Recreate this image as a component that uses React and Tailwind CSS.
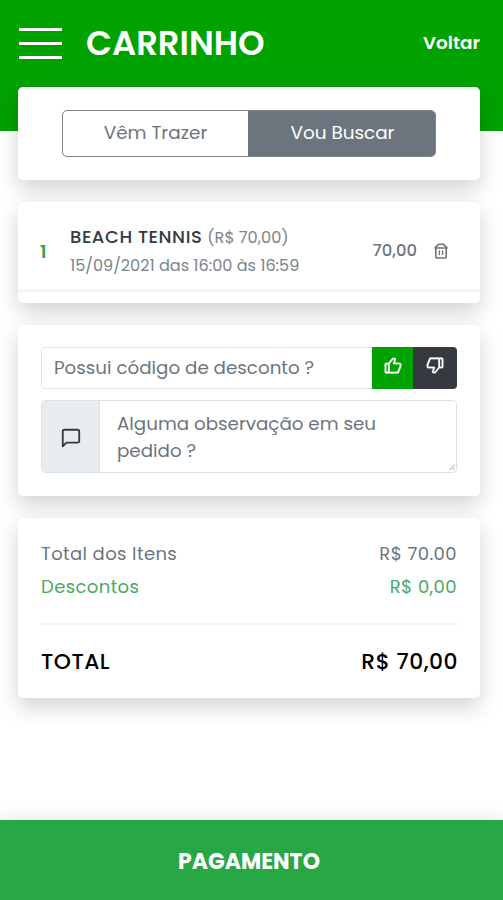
import React from 'react';
import { FiMessageSquare } from 'react-icons/fi';
import { BiLike, BiDislike } from 'react-icons/bi';

const TrashIcon = () => (
    <svg className="h-4 w-[14px]" viewBox="0 0 14 16" fill="none" stroke="#747474" strokeWidth="1.6" strokeLinejoin="round" strokeLinecap="round">
        <path d="M0.9 5h12.2M1.2 4.6L4.8 1.2h4.4l3.6 3.4M1.8 5v8.2q0 1.8 1.8 1.8h6.8q1.8 0 1.8-1.8V5" />
        <path d="M5.4 8v3.6M8.6 8v3.6" strokeWidth="1.4" />
    </svg>
);

const Card = ({ className, children }) => (
    <section className={`w-[462px] rounded-[5px] bg-white shadow-[0_9px_22px_rgba(0,0,0,0.18)] ${className}`}>
        {children}
    </section>
);

const App = () => {
    return (
        <div className="flex h-[900px] w-[503px] flex-col overflow-hidden bg-[linear-gradient(#00a200_131px,#ffffff_131px)] font-['Poppins','Inter',sans-serif] text-[#6c757d]">
            <header className="flex h-[87px] shrink-0 items-center pl-[19px] pr-[23px]">
                <button className="flex w-[43px] flex-col gap-[11px]" aria-label="Menu">
                    <span className="h-[3px] w-full bg-white" />
                    <span className="h-[3px] w-full bg-white" />
                    <span className="h-[3px] w-full bg-white" />
                </button>
                <h1 className="ml-6 w-[180px] whitespace-nowrap text-[33.8px] font-semibold leading-none text-white">CARRINHO</h1>
                <a className="mb-[2px] ml-auto text-[18.4px] font-semibold text-white">Voltar</a>
            </header>

            <main className="flex flex-1 flex-col pl-[18px]">
                <Card className="flex h-[93px] justify-center pt-[23px]">
                    <div className="flex h-[47px] w-[374px] overflow-hidden rounded-[5px] border border-[#7c8388] text-[18.4px]">
                        <button className="w-[185px] pb-[2px]">Vêm Trazer</button>
                        <button className="flex-1 bg-[#6c757d] pb-[2px] pl-[2px] text-white">Vou Buscar</button>
                    </div>
                </Card>

                <Card className="mt-[22px] h-[101px]">
                    <div className="flex h-[90px] items-center border-b-[3px] border-[#f5f5f5] pl-[22px] pr-8 pt-[11px]">
                        <span className="w-[30px] text-[18px] font-semibold text-[#28a745]">1</span>
                        <div className="flex-1 whitespace-nowrap">
                            <p className="text-[18px] leading-7 text-[#343a40]">
                                <span className="font-medium tracking-[0.55px]">BEACH TENNIS</span> <span className="text-[16.2px] text-[#7c848b]">(R$ 70,00)</span>
                            </p>
                            <p className="text-[16.1px] leading-7 text-[#7c848b]">15/09/2021 das 16:00 às 16:59</p>
                        </div>
                        <span className="mr-[17px] pt-px text-[16.4px] font-medium">70,00</span>
                        <TrashIcon />
                    </div>
                </Card>

                <Card className="mt-[22px] flex h-[171px] flex-col gap-[11px] px-[23px] pt-[22px]">
                    <div className="flex h-[42px] overflow-hidden rounded-[4px]">
                        <div className="flex flex-1 items-center rounded-l-[4px] border border-r-0 border-[#dfe3e7] pl-3 text-[18.3px]">Possui código de desconto ?</div>
                        <button className="flex w-[41px] justify-center bg-[#00a200] pt-[9px] text-white"><BiLike size={20} stroke="currentColor" strokeWidth={0.3} /></button>
                        <button className="flex w-[44px] justify-center bg-[#343a40] pt-[8px] text-white"><BiDislike size={20} stroke="currentColor" strokeWidth={0.3} /></button>
                    </div>
                    <div className="flex h-[73px] overflow-hidden rounded-[4px] border border-[#dde1e5]">
                        <div className="flex w-[58px] items-center justify-center border-r border-[#dde1e5] bg-[#e9ecef] pt-[2px] text-[#343a40]">
                            <FiMessageSquare size={22} />
                        </div>
                        <div className="relative flex-1 whitespace-nowrap pl-[17px] pt-[9px] text-[18.3px] leading-[27px]">
                            Alguma observação em seu<br />pedido ?
                            <svg className="absolute bottom-[2px] right-[1px] h-[6px] w-[6px]" viewBox="0 0 6 6" stroke="#888" strokeWidth="0.8"><path d="M0.5 6L6 0.5M3.5 6L6 3.5" /></svg>
                        </div>
                    </div>
                </Card>

                <Card className="mt-[22px] h-[180px] px-[23px] pt-[19px] text-[18px]">
                    <div className="flex h-[33px] items-center justify-between tracking-[0.4px]">
                        <span>Total dos Itens</span>
                        <span>R$ 70.00</span>
                    </div>
                    <div className="flex h-[33px] items-center justify-between tracking-[0.4px] text-[#4aa963]">
                        <span>Descontos</span>
                        <span>R$ 0,00</span>
                    </div>
                    <div className="mt-5 flex h-[76px] items-center justify-between border-t-2 border-[#f1f1f1] text-[21.8px] font-medium tracking-[0.5px] text-black">
                        <span>TOTAL</span>
                        <span className="-mr-px">R$ 70,00</span>
                    </div>
                </Card>
            </main>

            <footer className="flex h-20 shrink-0 items-center justify-center bg-[#28a745] pr-[5px] pt-[2px] text-[22px] font-bold text-white shadow-[0_-4px_18px_rgba(0,0,0,0.08)]">
                PAGAMENTO
            </footer>
        </div>
    );
};

export default App;
